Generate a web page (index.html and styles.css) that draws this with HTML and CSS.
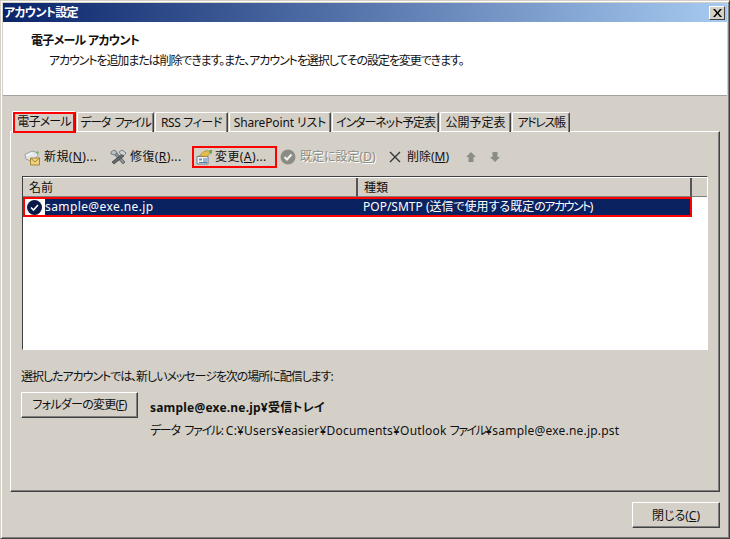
FILE: index.html
```html
<!DOCTYPE html>
<html lang="ja">
<head>
<meta charset="utf-8">
<title>アカウント設定</title>
<link rel="stylesheet" href="styles.css">
</head>
<body>
<div class="window">
  <div class="titlebar">
    <span class="title">アカウント設定</span>
    <span class="close"><svg width="9" height="8" viewBox="0 0 9 8"><path d="M0 0h2l2.500 3L7 0h2L5.500 4 9 8H7L4.500 5 2 8H0l3.500-4z" fill="#000"/></svg></span>
  </div>
  <div class="header">
    <div class="h-title">電子メール アカウント</div>
    <div class="h-sub">アカウントを追加または削除できます。また、アカウントを選択してその設定を変更できます。</div>
  </div>
  <div class="body">
    <div class="tabs">
      <div class="tab active w1"><span>電子メール</span></div>
      <div class="tab w2">データ ファイル</div>
      <div class="tab w3">RSS フィード</div>
      <div class="tab w4">SharePoint リスト</div>
      <div class="tab w5">インターネット予定表</div>
      <div class="tab w6">公開予定表</div>
      <div class="tab w7">アドレス帳</div>
    </div>
    <div class="panel">
      <div class="toolbar">
        <div class="tool t1">
          <svg width="17" height="17" viewBox="0 0 17 17"><path d="M1 5.500 8 2l5 1.500 1 3-6 6-6-2.500z" fill="#e4e7ea" stroke="#9aa0a6"/><path d="M2 6.500 8.500 4" stroke="#fff" fill="none"/><circle cx="13.500" cy="3.500" r="1.200" fill="#5fc04a"/><path d="M6.500 9h9v7h-9z" fill="#f0d27e" stroke="#a5853a"/><path d="M6.500 9l4.500 4 4.500-4" fill="none" stroke="#a5853a"/></svg>
          <span>新規(<u>N</u>)...</span>
        </div>
        <div class="tool t2">
          <svg width="17" height="16" viewBox="0 0 17 16"><path d="M3 4 6 3l9 10-2 2z" fill="#8d9297" stroke="#4f5358" stroke-width=".7"/><path d="M12 5 14 7 4 15l-2-2z" fill="#62676c" stroke="#3a3d41" stroke-width=".7"/><path d="M1 3c2-2 4-2 5-1l1 2-3 2-3-1z" fill="#b8c0c8" stroke="#5a6067" stroke-width=".7"/><path d="M9 3l3-2 4 3-2 2.500-3-1z" fill="#cfd4d9" stroke="#5a6067" stroke-width=".7"/></svg>
          <span>修復(<u>R</u>)...</span>
        </div>
        <div class="tool t3 marked">
          <svg width="17" height="16" viewBox="0 0 17 16"><path d="M1 7.500h11v7.500H1z" fill="#f4f5f2" stroke="#6d7a88"/><path d="M3 9.500h3v2H3z" fill="#6d94c4"/><path d="M7 10h4M7 12h4M3 13.500h8" stroke="#4f79ad"/><path d="M3 7 8 2.500l4-1 2 3-3 3z" fill="#e5bd4f" stroke="#a6842a" stroke-width=".7"/><path d="M13 1h3v3.500h-2z" fill="#5fa84a"/></svg>
          <span>変更(<u>A</u>)...</span>
        </div>
        <div class="tool t4 disabled">
          <svg width="16" height="16" viewBox="0 0 16 16"><circle cx="8" cy="8" r="7.500" fill="#8c8c86"/><path d="M4.500 8l2.500 2.500L11.500 5.500" fill="none" stroke="#f2f1ed" stroke-width="2"/></svg>
          <span>既定に設定(<u>D</u>)</span>
        </div>
        <div class="tool t5">
          <svg width="12" height="12" viewBox="0 0 12 12"><path d="M1 1l10 10M11 1 1 11" stroke="#33373b" stroke-width="1.400"/></svg>
          <span>削除(<u>M</u>)</span>
        </div>
        <div class="tool t6">
          <svg width="12" height="12" viewBox="0 0 12 12"><path d="M6 1l5 5H8.500v5h-5V6H1z" fill="#8c8c86"/></svg>
        </div>
        <div class="tool t7">
          <svg width="12" height="12" viewBox="0 0 12 12"><path d="M6 11 1 6h2.500V1h5v5H11z" fill="#8c8c86"/></svg>
        </div>
      </div>
      <div class="list">
        <div class="list-head">
          <div class="col c-name">名前</div>
          <div class="col c-type">種類</div>
          <div class="col c-rest"></div>
        </div>
        <div class="row">
          <div class="cell-name">
            <span class="check"><svg width="15" height="15" viewBox="0 0 15 15"><circle cx="7.500" cy="7.500" r="7.500" fill="#0a1a48"/><path d="M4 7.500l2.500 2.500L11 5" fill="none" stroke="#fff" stroke-width="1.600"/></svg></span>
            <span class="addr">sample@exe.ne.jp</span>
          </div>
          <div class="cell-type">POP/SMTP (送信で使用する既定<span class="kana">のアカウント</span>)</div>
        </div>
      </div>
      <div class="note">選択したアカウントでは、新しいメッセージを次の場所に配信します:</div>
      <div class="deliver">
        <div class="btn folder">フォルダーの変更(<u>F</u>)</div>
        <div class="deliver-text">
          <div class="inbox">sample@exe.ne.jp¥受信トレイ</div>
          <div class="path"><span class="kana-a">データ ファイル:</span> <span class="latin">C:¥Users¥easier¥Documents¥Outlook</span> <span class="kana">ファイル</span><span class="latin">¥sample@exe.ne.jp.pst</span></div>
        </div>
      </div>
    </div>
    <div class="footer">
      <div class="btn closebtn">閉じる(<u>C</u>)</div>
    </div>
  </div>
</div>
</body>
</html>
```
FILE: styles.css
```css
* { box-sizing: border-box; }
html, body { margin: 0; padding: 0; }
body {
  width: 730px;
  height: 539px;
  overflow: hidden;
  font-family: "Noto Sans", "Noto Sans CJK JP", sans-serif;
  font-feature-settings: "palt";
  font-size: 12px;
  color: #111;
  background: #d4d0c8;
}
.window {
  width: 730px;
  height: 539px;
  display: flex;
  flex-direction: column;
  padding: 2px;
  border: 1px solid #404040;
  border-top-color: #d4d0c8;
  border-left-color: #d4d0c8;
  background: #d4d0c8;
  box-shadow: inset 1px 1px 0 #fff, inset -1px -1px 0 #808080;
}
.titlebar {
  height: 19px;
  flex: none;
  display: flex;
  align-items: center;
  justify-content: space-between;
  padding: 0 2px 0 1px;
  background: linear-gradient(90deg, #0a246a, #a6caf0);
}
.title {
  color: #fff;
  font-weight: 700;
  line-height: 16px;
  letter-spacing: -.7px;
}
.close {
  width: 16px;
  height: 14px;
  display: flex;
  align-items: center;
  justify-content: center;
  background: #d4d0c8;
  border: 1px solid;
  border-color: #fff #404040 #404040 #fff;
}
.header {
  height: 74px;
  flex: none;
  background: #fff;
  border-bottom: 1px solid #a5a29b;
  padding: 10px 0 0 28px;
}
.h-title { font-weight: 700; line-height: 18px; letter-spacing: -.7px; }
.h-sub { padding-left: 18px; line-height: 18px; margin-top: 2px; letter-spacing: -1.1px; }
.body {
  flex: 1;
  padding: 14px 7px 0 7px;
  display: flex;
  flex-direction: column;
  min-height: 0;
}
.tabs {
  display: flex;
  height: 22px;
  align-items: flex-end;
  gap: 1px;
  padding-left: 2px;
  position: relative;
  z-index: 1;
}
.tab {
  height: 20px;
  border: 1px solid #fff;
  border-right-color: #404040;
  border-bottom: 0;
  border-radius: 2px 2px 0 0;
  box-shadow: inset -1px 0 0 #808080;
  text-align: center;
  line-height: 20px;
  white-space: nowrap;
}
.w1 { width: 64px; height: 22px; letter-spacing: -.8px; }
.w2 { width: 77px; letter-spacing: -1.4px; word-spacing: 3px; }
.w3 { width: 73px; letter-spacing: -.4px; }
.w4 { width: 102px; letter-spacing: -.15px; }
.w5 { width: 107px; letter-spacing: -1.1px; }
.w6 { width: 71px; }
.w7 { width: 58px; letter-spacing: -1.4px; }
.tab.active { background: #d4d0c8; margin-bottom: -1px; }
.tab.active span {
  display: block;
  height: 21px;
  line-height: 16px;
  border: 2px solid #f00;
}
.panel {
  width: 710px;
  height: 361px;
  flex: none;
  margin-top: -1px;
  border: 1px solid #fff;
  border-right-color: #404040;
  border-bottom-color: #404040;
  box-shadow: inset -1px -1px 0 #808080;
  padding: 14px 11px 0 11px;
  display: flex;
  flex-direction: column;
}
.toolbar {
  display: flex;
  height: 22px;
  align-items: center;
  flex: none;
}
.tool {
  display: flex;
  align-items: center;
  white-space: nowrap;
  height: 22px;
  flex: none;
}
.tool span { margin-left: 3px; line-height: 16px; }
.t1 { margin-left: 2px; width: 86px; letter-spacing: .4px; }
.t2 { width: 82px; letter-spacing: .4px; }
.t3 { width: 85px; padding-left: 2px; letter-spacing: .4px; }
.t3 span { margin-left: 2px; }
.t4 { width: 109px; margin-left: 3px; }
.t4 span { margin-left: 4px; }
.t5 { width: 76px; }
.t5 span { margin-left: 6px; }
.t6 { width: 24px; }
.t7 { width: 12px; }
.marked { border: 2px solid #f00; }
.disabled { color: #8c8c86; text-shadow: 1px 1px 0 #fff; }
.list {
  height: 174px;
  flex: none;
  margin-top: 8px;
  background: #fff;
  border: 1px solid #808080;
  border-top-color: #404040;
  border-left-color: #404040;
  border-right-color: #fff;
  border-bottom-color: #fff;
  padding-top: 1px;
}
.list-head {
  display: flex;
  height: 19px;
  background: #d4d0c8;
}
.col {
  padding-left: 6px;
  line-height: 20px;
  border-right: 2px solid #555;
  border-bottom: 1px solid #808080;
}
.c-name { width: 335px; }
.c-type { width: 334px; }
.c-rest { flex: 1; border-right: 0; }
.row {
  display: flex;
  width: 669px;
  height: 20px;
  border: 2px solid #f00;
  background: #0a2260;
  color: #fff;
  align-items: center;
}
.cell-name { width: 338px; display: flex; align-items: center; line-height: 14px; padding-bottom: 1px; }
.addr { letter-spacing: .4px; }
.check { width: 20px; height: 16px; padding-left: 2px; background: #fff; display: flex; align-items: center; flex: none; margin-top: 1px; }
.cell-type { white-space: nowrap; line-height: 14px; padding-bottom: 1px; }
.kana { letter-spacing: -1.5px; }
.kana-a { letter-spacing: -1.3px; word-spacing: 3px; }
.latin { letter-spacing: .2px; }
.note { margin: 18px 0 0 -1px; line-height: 18px; letter-spacing: -1.05px; }
.deliver { display: flex; margin: 6px 0 0 -1px; }
.btn {
  background: #d4d0c8;
  border: 1px solid #fff;
  border-right-color: #404040;
  border-bottom-color: #404040;
  box-shadow: inset -1px -1px 0 #808080;
  text-align: center;
  white-space: nowrap;
}
.folder { width: 117px; height: 26px; line-height: 24px; flex: none; letter-spacing: -.75px; }
.deliver-text { margin-left: 12px; }
.inbox { font-weight: 700; line-height: 18px; margin-top: 7px; letter-spacing: .2px; }
.path { line-height: 18px; margin-top: 5px; white-space: nowrap; }
.footer { display: flex; justify-content: flex-end; padding-top: 10px; }
.closebtn { width: 88px; height: 26px; line-height: 25px; }
```
